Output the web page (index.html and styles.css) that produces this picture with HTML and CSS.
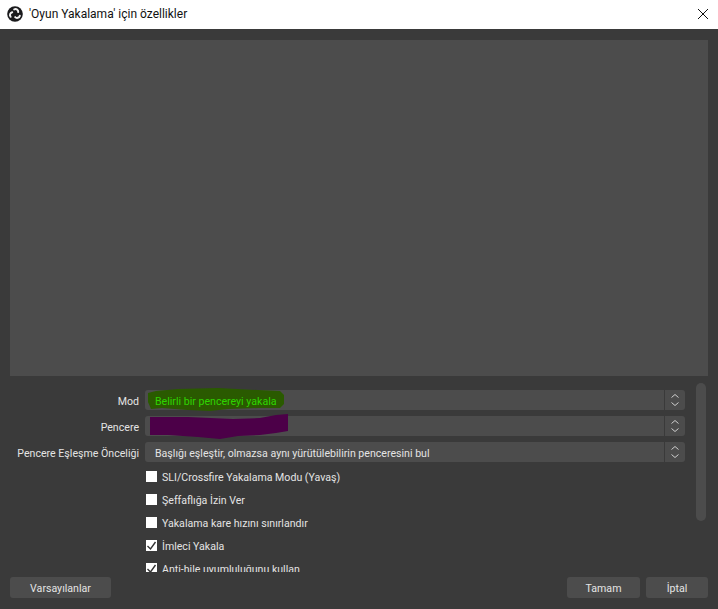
FILE: index.html
```html
<!DOCTYPE html>
<html lang="en">
<head>
    <meta charset="UTF-8">
    <title>'Oyun Yakalama' için özellikler</title>
    <link rel="stylesheet" href="styles.css">
</head>
<body>
    <div class="dialog">
        <div class="titlebar">
            <svg class="obs-logo" width="16" height="16" viewBox="0 0 16 16">
                <circle cx="8" cy="8" r="7.8" fill="#1a1a1c"/>
                <g fill="none" stroke="#f2f2f2" stroke-width="2" stroke-linecap="round">
                    <path d="M7.2 3.4c2.2-.9 4.2.5 4 2.6"/>
                    <path d="M12.8 9.8c-.8 2.2-3.2 2.7-4.6 1.3"/>
                    <path d="M3.6 10.8c-1.3-1.9-.5-4 1.6-4.6"/>
                </g>
            </svg>
            <span class="title">'Oyun Yakalama' için özellikler</span>
            <svg class="close" width="12" height="12" viewBox="0 0 12 12">
                <path d="M1 1l10 10M11 1L1 11" stroke="#111" stroke-width="1" fill="none"/>
            </svg>
        </div>

        <div class="content">
            <div class="preview"></div>

            <div class="props">
                <div class="props-list">
                    <div class="row">
                        <label class="row-label">Mod</label>
                        <div class="combo">
                            <svg class="scribble" width="140" height="26" viewBox="0 0 140 26">
                                <path fill="#2a5a00" d="M0 6 L8 4 L30 2 L70 1 L110 3 L132 4 L136 8 L136 17 L132 21 L110 21 L80 22 L62 24 L40 23 L14 21 L3 22 L0 15z"/>
                            </svg>
                            <span class="combo-text combo-text-green">Belirli bir pencereyi yakala</span>
                            <span class="arrows">
                                <svg width="10" height="14" viewBox="0 0 10 14"><path d="M1.5 4.5L5 1.5l3.5 3M1.5 9.5L5 12.5l3.5-3" stroke="#cfcfcf" fill="none"/></svg>
                            </span>
                        </div>
                    </div>
                    <div class="row">
                        <label class="row-label">Pencere</label>
                        <div class="combo">
                            <svg class="scribble" width="142" height="27" viewBox="0 0 142 27">
                                <path fill="#4c0048" d="M2 4 L40 4 L85 6 L112 5 L128 2 L140 1 L140 18 L128 20 L112 22 L90 23 L72 26 L50 24 L20 22 L2 22z"/>
                            </svg>
                            <span class="arrows">
                                <svg width="10" height="14" viewBox="0 0 10 14"><path d="M1.5 4.5L5 1.5l3.5 3M1.5 9.5L5 12.5l3.5-3" stroke="#cfcfcf" fill="none"/></svg>
                            </span>
                        </div>
                    </div>
                    <div class="row">
                        <label class="row-label">Pencere Eşleşme Önceliği</label>
                        <div class="combo">
                            <span class="combo-text">Başlığı eşleştir, olmazsa aynı yürütülebilirin penceresini bul</span>
                            <span class="arrows">
                                <svg width="10" height="14" viewBox="0 0 10 14"><path d="M1.5 4.5L5 1.5l3.5 3M1.5 9.5L5 12.5l3.5-3" stroke="#cfcfcf" fill="none"/></svg>
                            </span>
                        </div>
                    </div>
                    <div class="check-row"><span class="box"></span>SLI/Crossfire Yakalama Modu (Yavaş)</div>
                    <div class="check-row"><span class="box"></span>Şeffaflığa İzin Ver</div>
                    <div class="check-row"><span class="box"></span>Yakalama kare hızını sınırlandır</div>
                    <div class="check-row">
                        <span class="box"><svg width="11" height="11" viewBox="0 0 11 11"><path d="M1.5 6l3 3 5-7" stroke="#333" stroke-width="1.4" fill="none"/></svg></span>İmleci Yakala
                    </div>
                    <div class="check-row">
                        <span class="box"><svg width="11" height="11" viewBox="0 0 11 11"><path d="M1.5 6l3 3 5-7" stroke="#333" stroke-width="1.4" fill="none"/></svg></span>Anti-hile uyumluluğunu kullan
                    </div>
                </div>
                <div class="scrollbar"></div>
            </div>

            <div class="buttons">
                <button class="btn btn-defaults">Varsayılanlar</button>
                <button class="btn btn-ok">Tamam</button>
                <button class="btn btn-cancel">İptal</button>
            </div>
        </div>
    </div>
</body>
</html>
```

FILE: styles.css
```css
html, body {
    margin: 0;
    height: 100%;
}

body {
    background-color: #3a3a3a;
    font-family: 'Roboto', 'Noto Sans', sans-serif;
    font-size: 10.6px;
    color: #e4e4e4;
    overflow: hidden;
}

.dialog {
    display: flex;
    flex-direction: column;
    height: 609px;
}

.titlebar {
    display: flex;
    align-items: center;
    height: 29px;
    padding: 0 9px 1px 7px;
    box-sizing: border-box;
    background-color: #fff;
    color: #111;
    font-size: 12px;
}

.obs-logo {
    margin-right: 6px;
}

.title {
    flex: 1;
}

.content {
    flex: 1;
    display: flex;
    flex-direction: column;
    padding: 11px 10px 11px 10px;
    min-height: 0;
}

.preview {
    height: 336px;
    background-color: #4c4c4c;
}

.props {
    display: flex;
    height: 189px;
    margin-top: 7px;
    overflow: hidden;
}

.props-list {
    flex: 1;
    overflow: hidden;
    padding-top: 7px;
}

.row {
    display: flex;
    align-items: center;
    height: 20px;
    margin-bottom: 6px;
}

.row-label {
    width: 129px;
    margin-right: 6px;
    padding-top: 2px;
    text-align: right;
    white-space: nowrap;
}

.combo {
    position: relative;
    display: flex;
    align-items: center;
    justify-content: space-between;
    width: 540px;
    height: 20px;
    background-color: #4c4c4c;
    border-radius: 3px;
}

.scribble {
    position: absolute;
    left: 3px;
    top: -3px;
}

.combo-text {
    position: relative;
    padding: 2px 0 0 10px;
    white-space: nowrap;
}

.combo-text-green {
    color: #2fd400;
}

.arrows {
    position: absolute;
    right: 0;
    top: 0;
    display: flex;
    align-items: center;
    justify-content: center;
    width: 20px;
    height: 20px;
    border-left: 1px solid #3a3a3a;
}

.check-row {
    display: flex;
    align-items: flex-start;
    height: 17px;
    margin-bottom: 6px;
    margin-left: 136px;
    line-height: 19px;
    white-space: nowrap;
}

.box {
    display: flex;
    align-items: center;
    justify-content: center;
    width: 11px;
    height: 11px;
    margin: 3px 5px 0 0;
    background-color: #fff;
}

.scrollbar {
    width: 10px;
    height: 138px;
    margin: 0 2px 0 11px;
    background-color: #4c4c4c;
    border-radius: 5px;
}

.buttons {
    display: flex;
    margin-top: 5px;
    gap: 6px;
}

.btn {
    height: 21px;
    padding: 2px 0 0;
    border: none;
    border-radius: 3px;
    background-color: #4c4c4c;
    color: #e4e4e4;
    font: inherit;
}

.btn-defaults {
    width: 101px;
    margin-right: auto;
}

.btn-ok {
    width: 73px;
}

.btn-cancel {
    width: 62px;
}
```
